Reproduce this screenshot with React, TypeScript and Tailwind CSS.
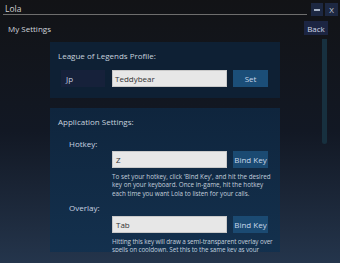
import React from "react";

const KeyRow: React.FC<{ label: string; value: string; help: string; tight?: boolean }> = ({ label, value, help, tight }) => (
  <div>
    <div className="pl-[19px] h-[16px] flex items-center text-[8px] leading-[11px] text-[#c9d3e0]">{label}</div>
    <div className="flex items-center gap-[6px] pl-[62px]">
      <div className="w-[115px] h-[17px] bg-[#e7e7e7] border border-[#c9c9c9] flex items-center px-[3px] text-[8px] leading-[11px] text-[#333]">
        {value}
      </div>
      <button className="w-[35px] h-[17px] bg-[#1b4a72] text-[8px] leading-[11px] text-[#c8d8ea]">Bind Key</button>
    </div>
    <p
      className={
        tight
          ? "pl-[62px] pr-0 mt-[5px] text-[6.3px] leading-[8.3px] tracking-[-0.1px] text-[#c3cfdc]"
          : "pl-[62px] pr-[5px] mt-[5px] text-[6.3px] leading-[8.3px] text-[#c3cfdc]"
      }
    >
      {help}
    </p>
  </div>
);

const App: React.FC = () => {
  return (
    <div
      className="w-[340px] h-[263px] overflow-hidden bg-gradient-to-b from-[#121316] via-[#121824] to-[#24354c]"
      style={{ fontFamily: '"Open Sans", "Noto Sans", sans-serif' }}
    >
      {/* title bar */}
      <div className="h-[17px] flex items-start pt-[3px] pr-[2px]">
        <div className="flex-1 ml-[3px] mr-[4px] h-[12px] border-b border-[#6e6e6e] flex items-center pl-[2px] text-[8.5px] leading-[11px] text-[#d0d0d0]">
          Lola
        </div>
        <button className="w-[12px] h-[13px] bg-[#1d2842] flex items-center justify-center">
          <span className="block w-[6px] h-[2px] bg-[#a9b4c6]" />
        </button>
        <button className="w-[13px] h-[13px] ml-[2px] bg-[#1d2842] text-[8px] leading-none text-[#c6cfdc]">X</button>
      </div>

      {/* header */}
      <div className="h-[21px] flex items-center pl-[8px] pr-[12px] pt-[1px]">
        <span className="flex-1 text-[8px] leading-[11px] text-[#cfd5dc]">My Settings</span>
        <button className="w-[24px] h-[14px] bg-[#1c2542] text-[8px] leading-[11px] text-[#d0d8e6]">Back</button>
      </div>

      {/* scroll area */}
      <div className="flex h-[214px] overflow-hidden">
        <div className="ml-[50px] w-[230px] h-[214px] overflow-hidden pt-[4px]">
          <div className="bg-[#0e2034] h-[56px] pt-[8px] pl-[8px]">
            <div className="text-[8px] leading-[11px] text-[#c7d2de]">League of Legends Profile:</div>
            <div className="flex items-center mt-[9px] pl-[3px]">
              <div className="w-[44px] h-[17px] bg-[#16213a] flex items-center px-[5px] text-[8px] leading-[11px] text-[#c6d0e0]">
                Jp
              </div>
              <div className="w-[115px] h-[17px] ml-[7px] bg-[#e7e7e7] border border-[#c9c9c9] flex items-center px-[2px] text-[8px] leading-[11px] text-[#333]">
                Teddybear
              </div>
              <button className="w-[35px] h-[17px] ml-[6px] bg-[#1b4e78] text-[8px] leading-[11px] text-[#c8d8ea]">Set</button>
            </div>
          </div>
          <div className="mt-[10px] bg-gradient-to-b from-[#0f253d] to-[#143250] pt-[8px] pb-[10px]">
            <div className="pl-[8px] text-[8px] leading-[11px] text-[#c7d2de]">Application Settings:</div>
            <div className="mt-[8px]">
              <KeyRow
                label="Hotkey:"
                value="Z"
                help="To set your hotkey, click 'Bind Key', and hit the desired key on your keyboard. Once in-game, hit the hotkey each time you want Lola to listen for your calls."
              />
            </div>
            <div className="mt-[2px]">
              <KeyRow
                tight
                label="Overlay:"
                value="Tab"
                help="Hitting this key will draw a semi-transparent overlay over spells on cooldown. Set this to the same key as your scoreboard key so it shows when you check cooldowns."
              />
            </div>
          </div>
        </div>
        <div className="ml-[42px] pt-[1px]">
          <div className="w-[5px] h-[105px] rounded-b-full bg-[#17303f]" />
        </div>
      </div>
    </div>
  );
};

export default App;
